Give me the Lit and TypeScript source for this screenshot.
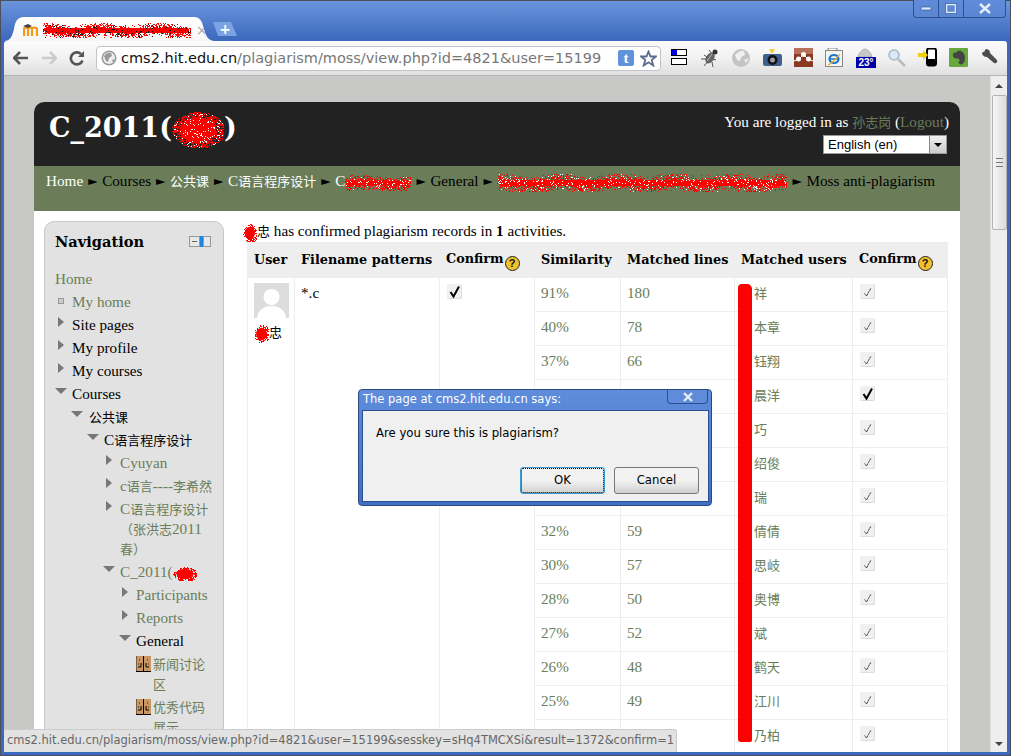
import { LitElement, html, css, svg } from 'lit'
import { customElement } from 'lit/decorators.js'

// deterministic red "marker" noise used for the redacted names
function scribble(w: number, h: number, seed = 7, density = 1, speck = '') {
  let s = seed * 7919 + 13
  const rnd = () => {
    s = (s * 1103515245 + 12345) & 0x7fffffff
    return s / 0x7fffffff
  }
  const cx = w / 2
  const cy = h / 2
  const band = w / h > 3
  let d = ''
  let spots = ''
  const count = Math.round(w * h * 0.7 * density)
  for (let i = 0; i < count; i++) {
    let x: number
    let y: number
    if (band) {
      x = rnd() * w
      const wob = Math.sin(x / 9 + seed) * h * 0.14
      y = cy + wob + (rnd() + rnd() + rnd() - 1.5) * h * 0.42
    } else {
      const a = rnd() * Math.PI * 2
      const r = Math.sqrt(rnd())
      x = cx + Math.cos(a) * r * cx
      y = cy + Math.sin(a) * r * cy
    }
    const p = `M${Math.round(x)} ${Math.round(y)}h${rnd() > 0.5 ? 2 : 1}v1h-1z`
    if (speck && rnd() < 0.09) spots += p
    else d += p
  }
  return html`<svg class="scr" width=${w} height=${h} viewBox="0 0 ${w} ${h}">
    ${band
      ? svg`<rect x="2" y=${cy - h * 0.16} width=${w - 4} height=${h * 0.32} rx="2" fill="#f00" />`
      : svg`<ellipse cx=${cx} cy=${cy} rx=${cx * 0.7} ry=${cy * 0.7} fill="#f00" />`}
    <path d=${d} fill="#f00" shape-rendering="crispEdges" />
    ${speck ? svg`<path d=${spots} fill=${speck} shape-rendering="crispEdges" />` : ''}
  </svg>`
}

const zh = (text: string) => html`<span class="zh">${text}</span>`

const check = (on: boolean) =>
  html`<span class="cb"><svg width="15" height="15" viewBox="0 0 15 15">
    <path d=${on ? 'M3.500 8l3 4.500L12 2.500' : 'M4.500 9.500l2 2.500L11 4'} fill="none" stroke="#000"
      stroke-width=${on ? 2 : 0.8} stroke-dasharray=${on ? 'none' : '1.500 0.500'} /></svg></span>`

const helpIcon = html`<span class="help">?</span>`

const forumIcon = html`<svg class="forum" width="15" height="16" viewBox="0 0 15 16">
  <rect width="15" height="15" fill="#c89763" />
  <path d="M7.500 0v15M0 15.500h15M5 7v4H2M10 7v4h3M7 11h1" stroke="#000" fill="none" />
  <path d="M3 4h1M11 4h1M2 8h1M12 8h1M0 0v15" stroke="#222" />
</svg>`

type NavItem = { label: unknown; iconX: number; textX: number; icon?: string; link?: boolean }

const navItems: NavItem[] = [
  { label: 'Home', iconX: 55, textX: 55, link: true },
  { label: 'My home', iconX: 58, textX: 72, icon: 'bullet', link: true },
  { label: 'Site pages', iconX: 58, textX: 72, icon: 'right' },
  { label: 'My profile', iconX: 58, textX: 72, icon: 'right' },
  { label: 'My courses', iconX: 58, textX: 72, icon: 'right' },
  { label: 'Courses', iconX: 55, textX: 72, icon: 'down' },
  { label: zh('公共课'), iconX: 71, textX: 89, icon: 'down' },
  { label: html`C${zh('语言程序设计')}`, iconX: 87, textX: 104, icon: 'down' },
  { label: 'Cyuyan', iconX: 106, textX: 120, icon: 'right', link: true },
  { label: html`c${zh('语言')}----${zh('李希然')}`, iconX: 106, textX: 120, icon: 'right', link: true },
  { label: html`C${zh('语言程序设计')}<br />${zh('（张洪志')}2011<br />${zh('春）')}`, iconX: 106, textX: 120, icon: 'right', link: true },
  { label: html`C_2011(${scribble(24, 14, 3)}`, iconX: 103, textX: 120, icon: 'down', link: true },
  { label: 'Participants', iconX: 122, textX: 136, icon: 'right', link: true },
  { label: 'Reports', iconX: 122, textX: 136, icon: 'right', link: true },
  { label: 'General', iconX: 119, textX: 136, icon: 'down' },
  { label: html`${zh('新闻讨论')}<br />${zh('区')}`, iconX: 136, textX: 153, icon: 'forum', link: true },
  { label: html`${zh('优秀代码')}<br />${zh('展示')}`, iconX: 136, textX: 153, icon: 'forum', link: true },
]

const rows: [string, string, string, boolean][] = [
  ['91%', '180', '祥', false],
  ['40%', '78', '本章', false],
  ['37%', '66', '钰翔', false],
  ['', '', '晨洋', true],
  ['', '', '巧', false],
  ['', '', '绍俊', false],
  ['', '', '瑞', false],
  ['32%', '59', '倩倩', false],
  ['30%', '57', '思岐', false],
  ['28%', '50', '奥博', false],
  ['27%', '52', '斌', false],
  ['26%', '48', '鹤天', false],
  ['25%', '49', '江川', false],
  ['', '', '乃柏', false],
]

const extensions = [
  svg`<rect x="1.500" y="1.500" width="15" height="6" fill="#fff" stroke="#000"/><rect x="2" y="2" width="5" height="5" fill="#00e"/><rect x="1.500" y="10.500" width="15" height="6" fill="#fff" stroke="#000"/>`,
  svg`<ellipse cx="9" cy="10" rx="4" ry="6" transform="rotate(35 9 10)" fill="#666"/><path d="M3 7l3 2M0 11l5 0M3 18l4-5M8 2l3 4M15 12l-3-1M12 19l-1-5" stroke="#555" fill="none"/><circle cx="14" cy="4" r="2.500" fill="#333"/><path d="M6 13l5-7" stroke="#bbb"/>`,
  svg`<circle cx="9" cy="10" r="9" fill="#c4c4c4"/><path d="M3 7c3-3 6-5 9-4l1 4-4 2-1 4-3-1z" fill="#f0f0f0"/><path d="M12 12l5-2-3 5z" fill="#eee"/>`,
  svg`<path d="M6 1h6l-2 4H8z" fill="#f0d040"/><rect x="0" y="6" width="19" height="12" rx="2" fill="#3f5f8f"/><circle cx="9.500" cy="12" r="5" fill="#111"/><circle cx="9.500" cy="12" r="2.500" fill="#99a"/>`,
  svg`<rect width="19" height="19" fill="#8a3a22"/><rect width="19" height="6" fill="#b5715a"/><circle cx="4.500" cy="11" r="2.500" fill="#fff"/><circle cx="9.500" cy="6.500" r="2.500" fill="#fff"/><circle cx="14.500" cy="11" r="2.500" fill="#fff"/><path d="M0 13l5-2 4.500-4.500 4.500 4.500 5 2" stroke="#fff" fill="none"/>`,
  svg`<rect x="0.500" y="2.500" width="17" height="16" fill="#f4f4f0" stroke="#888"/><path d="M3 2V0h9v2" stroke="#888" fill="none"/><ellipse cx="9" cy="11" rx="4.500" ry="4" fill="none" stroke="#1b78d0" stroke-width="2.200"/><path d="M4.500 11h9" stroke="#1b78d0" stroke-width="1.500"/><path d="M3 17c3-1 10-8 12-11" stroke="#f0b020" stroke-width="1.200" fill="none"/>`,
  svg`<path d="M2 9c1-5 5-8 7-8s6 3 7 8z" fill="#c8c8c8" stroke="#888" stroke-width="0.500"/><rect y="9" width="20" height="11" fill="#00a"/>`,
  svg`<circle cx="7" cy="7" r="5" fill="#dbe8f7" stroke="#a8b8c8" stroke-width="1.500"/><path d="M11 11l7 7" stroke="#bbb" stroke-width="2.500"/>`,
  svg`<rect x="9" y="0.500" width="9" height="17" rx="2" fill="#fff" stroke="#000" stroke-width="2"/><rect x="9" y="11" width="9" height="7" fill="#000"/><path d="M0 5h5V2l5 5-5 5V9H0z" fill="#f2cf10"/>`,
  svg`<rect width="19" height="19" rx="1" fill="#66a83c"/><path d="M5 5h3l1-2c3 0 5 1 6 4 1 4 0 8-2 9-2 0-3 0-3-2 0-1 2-1 2 0M5 5c-1 2-1 4 1 5h3" fill="#444" stroke="#444"/>`,
  svg`<path d="M3 4l3-3c2 0 4 1 4 4l7 7c1 2-1 4-3 3L7 9C4 9 2 7 2 5z" fill="#4d4d4d"/><circle cx="3" cy="2" r="2" fill="#f0f0f0"/>`,
]

@customElement('app-root')
export class AppRoot extends LitElement {
  static styles = css`
    :host {
      display: block;
      width: 1011px;
      height: 756px;
      overflow: hidden;
      position: relative;
      font-family: 'Liberation Serif', 'Noto Sans CJK SC', serif;
    }
    .zh {
      font-size: 13px;
      line-height: 1;
    }
    .window {
      height: 756px;
      box-sizing: border-box;
      display: flex;
      flex-direction: column;
      padding: 0 4px 4px;
      background: linear-gradient(#6b96dd 0, #3c68bd 41px, #3c68bd 100%);
      box-shadow: inset 0 0 0 1px #4a4f5a;
    }
    .tabstrip {
      height: 41px;
      flex: none;
      display: flex;
      align-items: flex-end;
    }
    .tab {
      width: 211px;
      height: 24px;
      box-sizing: border-box;
      padding: 2px 0 0 19px;
      display: flex;
      align-items: center;
      gap: 4px;
      background: linear-gradient(#fff, #f6f6f6);
      clip-path: path('M0 24C6 24 8 20 10 12C11 5 13 0 20 0L190 0C196 0 198 4 200 12C202 20 205 24 211 24Z');
    }
    .tab .x {
      color: #aaa;
      font: 14px 'DejaVu Sans', sans-serif;
      margin-left: 1px;
    }
    .newtab {
      width: 24px;
      height: 14px;
      margin: 0 0 5px -2px;
      background: #7ba2e3;
      clip-path: polygon(0 0, 18px 0, 24px 14px, 5px 14px);
      color: #fff;
      font: bold 14px/14px 'DejaVu Sans', sans-serif;
      text-align: center;
    }
    .controls {
      margin-left: auto;
      margin-right: 1px;
      align-self: flex-start;
      display: flex;
      height: 17px;
      border: 1px solid #2c4f94;
      border-top: 0;
      border-radius: 0 0 4px 4px;
    }
    .controls div {
      width: 24px;
      display: flex;
      align-items: center;
      justify-content: center;
      border-left: 1px solid #2c4f94;
      background: linear-gradient(#5f8bd8, #5a86d2);
    }
    .controls div:first-child {
      border-left: 0;
      border-radius: 0 0 0 4px;
    }
    .controls div:last-child {
      width: 41px;
      border-radius: 0 0 4px 0;
    }
    .toolbar {
      height: 35px;
      flex: none;
      display: flex;
      align-items: center;
      box-sizing: border-box;
      padding-left: 3px;
      border-radius: 3px 3px 0 0;
      border-bottom: 1px solid #b4b4c0;
      background: linear-gradient(#fbfbfb, #f2f2f2 50%, #dfdfdf);
    }
    .nav-btn {
      width: 28px;
      height: 20px;
      display: flex;
      align-items: center;
      justify-content: center;
    }
    .omnibox {
      width: 565px;
      height: 25px;
      margin-left: 5px;
      margin-right: 3px;
      box-sizing: border-box;
      display: flex;
      align-items: center;
      background: #fff;
      border: 1px solid #c4c4c8;
      border-radius: 4px;
      padding-left: 4px;
      font: 14.500px 'DejaVu Sans', sans-serif;
      white-space: nowrap;
      color: #777;
    }
    .omnibox .host {
      color: #111;
    }
    .url {
      margin-left: 4px;
      width: 482px;
      white-space: nowrap;
    }
    .tw {
      width: 16px;
      height: 16px;
      margin-left: 15px;
      border-radius: 2px;
      background: #5f94dc;
      color: #fff;
      font: bold 15px/16px 'Liberation Serif', serif;
      text-align: center;
    }
    .star {
      margin-left: 6px;
    }
    .ext {
      width: 31px;
      height: 20px;
      display: flex;
      align-items: center;
      justify-content: center;
      position: relative;
    }
    .temp {
      position: absolute;
      left: 6px;
      top: 9px;
      width: 20px;
      text-align: center;
      color: #fff;
      font: bold 10px/11px 'Liberation Sans', sans-serif;
    }
    .viewport {
      flex: 1;
      min-height: 0;
      display: flex;
      overflow: hidden;
    }
    .content {
      width: 986px;
      flex: none;
      box-sizing: border-box;
      padding: 26px 30px 0;
      background: #c8c8c6;
      overflow: hidden;
    }
    .scrollbar {
      width: 17px;
      flex: none;
      box-sizing: border-box;
      background: #eeeeee;
      border-left: 1px solid #ddd;
      display: flex;
      flex-direction: column;
      align-items: center;
    }
    .arrow-up,
    .arrow-down {
      width: 0;
      height: 0;
      border-left: 4px solid transparent;
      border-right: 4px solid transparent;
    }
    .arrow-up {
      border-bottom: 4px solid #444;
      margin: 8px 0 7px;
    }
    .arrow-down {
      border-top: 4px solid #444;
      margin-top: auto;
      margin-bottom: 6px;
    }
    .thumb {
      width: 15px;
      height: 135px;
      box-sizing: border-box;
      border: 1px solid #b4b4b4;
      border-radius: 2px;
      background: linear-gradient(90deg, #f6f6f6, #dcdcdc);
      display: flex;
      align-items: center;
      justify-content: center;
    }
    .grip {
      width: 7px;
      height: 7px;
      border-top: 1px solid #777;
      border-bottom: 1px solid #777;
      background: linear-gradient(#777, #777) center / 100% 1px no-repeat;
    }
    .page {
      width: 926px;
      height: 900px;
      background: #fff;
      border-radius: 10px 10px 0 0;
      font-size: 15.200px;
      color: #000;
    }
    .head {
      height: 64px;
      box-sizing: border-box;
      background: #222;
      border-radius: 10px 10px 0 0;
      display: flex;
      justify-content: space-between;
      padding: 0 11px 0 15px;
    }
    .title {
      color: #fff;
      font: bold 27px/52px 'DejaVu Serif', serif;
      white-space: nowrap;
    }
    .login {
      color: #fff;
      text-align: right;
      padding-top: 10px;
      line-height: 20px;
    }
    .login a {
      color: #6a7d58;
    }
    .lang {
      width: 124px;
      height: 19px;
      margin: 3px 2px 0 auto;
      box-sizing: border-box;
      border: 1px solid #999;
      background: #fff;
      display: flex;
      justify-content: space-between;
      color: #000;
      font: 13px/17px 'Liberation Sans', sans-serif;
      text-align: left;
      padding-left: 4px;
    }
    .lang i {
      width: 16px;
      background: linear-gradient(#f0f0f0, #ccc);
      border-left: 1px solid #888;
      display: flex;
      align-items: center;
      justify-content: center;
    }
    .lang i::after {
      content: '';
      border-left: 4px solid transparent;
      border-right: 4px solid transparent;
      border-top: 4px solid #000;
    }
    .crumbs {
      height: 45px;
      box-sizing: border-box;
      padding: 5px 0 0 12px;
      background: #6a7d58;
      display: flex;
      align-items: flex-start;
      gap: 5px;
      white-space: nowrap;
      line-height: 20px;
      color: #000;
    }
    .crumbs .w {
      color: #fff;
    }
    .sep {
      width: 9px;
      overflow: visible;
      font: 12px/20px 'DejaVu Sans', sans-serif;
      color: #000;
    }
    .body {
      display: flex;
      padding: 10px 13px 0 10px;
    }
    .side {
      width: 180px;
      height: 700px;
      flex: none;
      box-sizing: border-box;
      background: #e2e2e2;
      border: 1px solid #c8c8c8;
      border-radius: 10px;
      padding-top: 10px;
    }
    .side-head {
      display: flex;
      justify-content: space-between;
      align-items: center;
      padding: 0 12px 0 10px;
      height: 20px;
      font: bold 14.600px/20px 'DejaVu Serif', serif;
    }
    .dock {
      display: block;
      margin-top: -2px;
    }
    .tree {
      margin-top: 17px;
    }
    .node {
      display: flex;
      margin-bottom: 3px;
      line-height: 20px;
      white-space: nowrap;
    }
    .node .ico {
      flex: none;
      display: block;
    }
    .node.link {
      color: #6a7d58;
    }
    .tri-r {
      display: block;
      width: 0;
      height: 0;
      margin-top: 2px;
      border-left: 6px solid #777;
      border-top: 5.500px solid transparent;
      border-bottom: 5.500px solid transparent;
    }
    .tri-d {
      display: block;
      width: 0;
      height: 0;
      margin-top: 4px;
      border-top: 6px solid #777;
      border-left: 6px solid transparent;
      border-right: 6px solid transparent;
    }
    .bullet {
      display: block;
      width: 6px;
      height: 6px;
      margin-top: 6px;
      box-sizing: border-box;
      border: 1px solid #999;
      background: #ccc;
    }
    .forum {
      margin-top: 2px;
      display: block;
    }
    .main {
      margin-left: 23px;
      width: 700px;
      flex: none;
    }
    .summary {
      height: 21px;
      line-height: 20px;
      white-space: nowrap;
      margin-left: -4px;
    }
    table {
      border-collapse: collapse;
      table-layout: fixed;
      width: 700px;
      position: relative;
    }
    th,
    td {
      box-sizing: border-box;
      border: 1px solid #eee;
      padding: 0 6px;
      text-align: left;
      vertical-align: top;
    }
    th {
      height: 35px;
      background: #eee;
      font-family: 'DejaVu Serif', serif;
      font-size: 12.800px;
      white-space: nowrap;
      vertical-align: middle;
      padding-bottom: 2px;
    }
    td {
      height: 34px;
      padding-top: 5px;
      line-height: 20px;
    }
    td.g {
      color: #6a7d58;
    }
    td.who {
      padding-left: 19px;
    }
    .avatar {
      display: block;
      margin-bottom: 4px;
    }
    .cb {
      display: inline-block;
      width: 15px;
      height: 15px;
      margin-top: 1px;
      background: #f0f0f0;
      border-radius: 2px;
      box-shadow: inset -1px -1px 0 #ddd;
      vertical-align: top;
    }
    .cb svg {
      display: block;
    }
    .help {
      display: inline-block;
      width: 15px;
      height: 15px;
      margin: -4px 0 -4px 1px;
      border-radius: 50%;
      background: #f2c12e;
      border: 1px solid #222;
      box-sizing: border-box;
      color: #111;
      font: bold 11px/13px 'Liberation Sans', sans-serif;
      text-align: center;
      vertical-align: -4px;
    }
    .scr {
      display: inline-block;
      vertical-align: middle;
      margin: -14px 0;
    }
    .redbar {
      position: absolute;
      left: 738px;
      top: 284px;
      width: 14px;
      height: 458px;
      background: #f00;
      border-radius: 4px 5px 2px 3px;
    }
    .status {
      position: absolute;
      left: 4px;
      bottom: 4px;
      width: 673px;
      height: 23px;
      box-sizing: border-box;
      padding-left: 3px;
      background: #e2e2e2;
      border-top: 1px solid #ccc;
      border-right: 1px solid #ccc;
      border-radius: 0 3px 0 0;
      color: #666;
      font: 11.500px/21px 'DejaVu Sans', sans-serif;
      white-space: nowrap;
    }
    .dialog {
      position: absolute;
      left: 358px;
      top: 389px;
      width: 354px;
      height: 117px;
      box-sizing: border-box;
      padding: 0 2px 3px 3px;
      display: flex;
      flex-direction: column;
      background: linear-gradient(#5f8ddc, #3f6fc4);
      border: 1px solid #2c4a80;
      border-radius: 4px;
      font-family: 'DejaVu Sans', sans-serif;
      font-size: 11.700px;
    }
    .dlg-title {
      height: 20px;
      flex: none;
      display: flex;
      justify-content: space-between;
      color: #fff;
      font-size: 11.500px;
      line-height: 18px;
    }
    .dlg-title b {
      font-weight: 400;
      padding-left: 1px;
    }
    .dlg-close {
      width: 41px;
      height: 14px;
      margin-right: 1px;
      box-sizing: border-box;
      display: flex;
      align-items: center;
      justify-content: center;
      background: #5f8bd8;
      border: 1px solid #2c4f94;
      border-top: 0;
      border-radius: 0 0 4px 4px;
    }
    .dlg-body {
      flex: 1;
      background: #f0f0f0;
      border: 1px solid #2c4f94;
      padding: 15px 9px 7px 13px;
      display: flex;
      flex-direction: column;
      color: #000;
    }
    .dlg-btns {
      margin-top: auto;
      display: flex;
      justify-content: flex-end;
      gap: 9px;
    }
    .btn {
      width: 85px;
      height: 27px;
      box-sizing: border-box;
      border: 1px solid #777;
      border-radius: 3px;
      background: linear-gradient(#f2f2f2 50%, #d0d0d0);
      text-align: center;
      line-height: 25px;
    }
    .btn.ok {
      border-color: #3a9ad0;
      outline: 1px dotted #000;
      outline-offset: -2px;
    }
  `

  private renderNode(n: NavItem) {
    const ico =
      n.icon === 'right'
        ? html`<span class="tri-r"></span>`
        : n.icon === 'down'
          ? html`<span class="tri-d"></span>`
          : n.icon === 'bullet'
            ? html`<span class="bullet"></span>`
            : n.icon === 'forum'
              ? forumIcon
              : ''
    return html`<div class="node ${n.link ? 'link' : ''}" style="padding-left:${n.iconX - 45}px">
      <span class="ico" style="width:${n.textX - n.iconX}px">${ico}</span>
      <span>${n.label}</span>
    </div>`
  }

  private renderChrome() {
    return html`
      <div class="tabstrip">
        <div class="tab">
          <svg width="16" height="14" viewBox="0 0 16 14">
            <path d="M1 13V6c0-2 4-2 4 0v7M5 6c0-2 4-2 4 0v7M9 6c0-2 5-2 5 0v7" fill="none" stroke="#f09a1a" stroke-width="2.200" />
            <path d="M0 3l5-2 4 2-4 2z" fill="#444" />
          </svg>
          ${scribble(148, 15, 11, 1.1, '#111')}
          <span class="x">×</span>
        </div>
        <div class="newtab">+</div>
        <div class="controls">
          <div><svg width="12" height="6"><rect x="1" y="1" width="10" height="3" rx="1" fill="#dfe8f7" stroke="#2c4f94" stroke-width="0.600" /></svg></div>
          <div><svg width="12" height="11"><rect x="1.500" y="1.500" width="9" height="8" fill="none" stroke="#e4ecf8" stroke-width="1.500" /><rect x="0.500" y="0.500" width="11" height="10" fill="none" stroke="#2c4f94" stroke-width="0.500" /></svg></div>
          <div><svg width="12" height="11"><path d="M1 1l10 9M11 1L1 10" stroke="#e4ecf8" stroke-width="2.500" /></svg></div>
        </div>
      </div>
      <div class="toolbar">
        <div class="nav-btn"><svg width="16" height="14" viewBox="0 0 16 14"><path d="M7 1L1 7l6 6M2 7h13" fill="none" stroke="#555" stroke-width="2.600" /></svg></div>
        <div class="nav-btn"><svg width="16" height="14" viewBox="0 0 16 14"><path d="M9 1l6 6-6 6M14 7H1" fill="none" stroke="#ccc" stroke-width="2.600" /></svg></div>
        <div class="nav-btn"><svg width="16" height="16" viewBox="0 0 16 16"><path d="M13.500 10.500A6 6 0 1 1 12 4" fill="none" stroke="#555" stroke-width="2.600" /><path d="M15 1v6H9z" fill="#555" /></svg></div>
        <div class="omnibox">
          <svg width="16" height="16" viewBox="0 0 16 16"><circle cx="8" cy="8" r="7.500" fill="#9a9a9a" /><circle cx="8" cy="8" r="6" fill="#eee" /><path d="M3 6c2-3 5-4 7-3l1 3-3 2-1 4-2-1zM11 10l3-1-2 4z" fill="#999" /></svg>
          <div class="url"><span class="host">cms2.hit.edu.cn</span>/plagiarism/moss/view.php?id=4821&amp;user=15199</div>
          <div class="tw">t</div>
          <svg class="star" width="17" height="17" viewBox="0 0 17 17"><path d="M8.500 1.500l2 5h5.500l-4.300 3.500 1.600 5.500-4.800-3.200-4.800 3.200 1.600-5.500L1 6.500h5.500z" fill="#fff" stroke="#5a6d8e" stroke-width="1.800" /></svg>
        </div>
        ${extensions.map(
          (icon, i) => html`<div class="ext">
            <svg width="20" height="20" viewBox="0 0 20 20">${icon}</svg>
            ${i === 6 ? html`<span class="temp">23°</span>` : ''}
          </div>`
        )}
      </div>
    `
  }

  private renderTable() {
    return html`<table>
      <colgroup>
        <col style="width:47px" /><col style="width:145px" /><col style="width:95px" /><col style="width:86px" />
        <col style="width:114px" /><col style="width:118px" /><col style="width:95px" />
      </colgroup>
      <tr>
        <th>User</th>
        <th>Filename patterns</th>
        <th>Confirm${helpIcon}</th>
        <th>Similarity</th>
        <th>Matched lines</th>
        <th>Matched users</th>
        <th>Confirm${helpIcon}</th>
      </tr>
      ${rows.map(
        (r, i) => html`<tr>
          ${i === 0
            ? html`<td rowspan="14">
                  <svg class="avatar" width="35" height="35" viewBox="0 0 35 35">
                    <rect width="35" height="35" fill="#ddd" />
                    <circle cx="17.500" cy="14" r="8" fill="#fff" />
                    <path d="M3 35c1-9 8-12 14.500-12S31 26 32 35z" fill="#fff" />
                  </svg>
                  <span style="white-space:nowrap">${scribble(15, 18, 5)}${zh('忠')}</span>
                </td>
                <td rowspan="14">*.c</td>
                <td rowspan="14" style="padding-left:7px">${check(true)}</td>`
            : ''}
          <td class="g">${r[0]}</td>
          <td class="g">${r[1]}</td>
          <td class="g who">${zh(r[2])}</td>
          <td style="padding-left:7px">${check(r[3])}</td>
        </tr>`
      )}
    </table>`
  }

  render() {
    return html`
      <div class="window">
        ${this.renderChrome()}
        <div class="viewport">
          <div class="content">
            <div class="page">
              <div class="head">
                <div class="title">C_2011(${scribble(52, 36, 2, 1.2, '#fff')})</div>
                <div class="login">
                  You are logged in as <a>${zh('孙志岗')}</a> (<a>Logout</a>)
                  <div class="lang">English (en)<i></i></div>
                </div>
              </div>
              <div class="crumbs">
                <span class="w">Home</span><span class="sep">►</span>
                <span>Courses</span><span class="sep">►</span>
                <span class="w">${zh('公共课')}</span><span class="sep">►</span>
                <span class="w">C${zh('语言程序设计')}</span><span class="sep">►</span>
                <span class="w">C${scribble(66, 16, 9, 1, '#fff')}</span><span class="sep">►</span>
                <span>General</span><span class="sep">►</span>
                <span class="w">${scribble(290, 18, 4, 1, '#fff')}</span><span class="sep">►</span>
                <span>Moss anti-plagiarism</span>
              </div>
              <div class="body">
                <div class="side">
                  <div class="side-head">
                    Navigation
                    <svg class="dock" width="22" height="11" viewBox="0 0 22 11">
                      <rect x="0.500" y="0.500" width="10" height="10" fill="#e8e8e8" stroke="#999" />
                      <path d="M3 5.500h5" stroke="#666" />
                      <rect x="11" y="0" width="3" height="11" fill="#1c86e0" />
                      <rect x="14.500" y="0.500" width="7" height="10" fill="#e8e8e8" stroke="#999" />
                    </svg>
                  </div>
                  <div class="tree">${navItems.map((n) => this.renderNode(n))}</div>
                </div>
                <div class="main">
                  <div class="summary">${scribble(14, 18, 6)}${zh('忠')} has confirmed plagiarism records in <b>1</b> activities.</div>
                  ${this.renderTable()}
                </div>
              </div>
            </div>
          </div>
          <div class="scrollbar">
            <span class="arrow-up"></span>
            <div class="thumb"><span class="grip"></span></div>
            <span class="arrow-down"></span>
          </div>
        </div>
      </div>
      <div class="redbar"></div>
      <div class="status">cms2.hit.edu.cn/plagiarism/moss/view.php?id=4821&amp;user=15199&amp;sesskey=sHq4TMCXSi&amp;result=1372&amp;confirm=1</div>
      <div class="dialog">
        <div class="dlg-title">
          <b>The page at cms2.hit.edu.cn says:</b>
          <div class="dlg-close"><svg width="14" height="10"><path d="M3 1l8 8M11 1L3 9" stroke="#e4ecf8" stroke-width="2.400" /></svg></div>
        </div>
        <div class="dlg-body">
          <div>Are you sure this is plagiarism?</div>
          <div class="dlg-btns">
            <div class="btn ok">OK</div>
            <div class="btn">Cancel</div>
          </div>
        </div>
      </div>
    `
  }
}
